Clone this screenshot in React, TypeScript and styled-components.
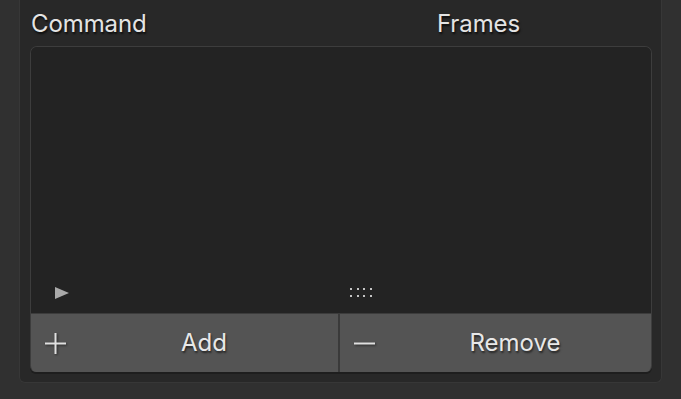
import React from "react";
import styled, { createGlobalStyle } from "styled-components";

const Global = createGlobalStyle`
  html, body { margin: 0; padding: 0; background: #303030; }
  body { font-family: Inter, "Noto Sans", sans-serif; }
`;

const Page = styled.div`
  width: 681px;
  height: 399px;
  padding: 0 19px 0 19px;
  box-sizing: border-box;
  background: #303030;
`;

const Panel = styled.div`
  width: 643px;
  height: 383px;
  box-sizing: border-box;
  background: #282828;
  border: 1px solid #373737;
  border-top: none;
  border-radius: 0 0 6px 6px;
  padding: 0 9px 10px 10px;
  display: flex;
  flex-direction: column;
`;

const Header = styled.div`
  height: 46px;
  display: flex;
  align-items: flex-start;
  flex-shrink: 0;
`;

const HeaderCell = styled.div<{ $w?: number }>`
  ${(p) => (p.$w ? `width: ${p.$w}px;` : "flex: 1;")}
  font-size: 24px;
  line-height: 24px;
  padding-top: 12px;
  padding-left: 1px;
  color: #e4e4e4;
  text-shadow: 1px 2px 2px rgba(0, 0, 0, 0.7);
  letter-spacing: -0.1px;
`;

const Box = styled.div`
  flex: 1;
  display: flex;
  flex-direction: column;
  border: 1px solid #3d3d3d;
  border-bottom: none;
  border-radius: 7px 7px 6px 6px;
  box-shadow: 0 2px 0 #1e1e1e;
  overflow: hidden;
`;

const List = styled.div`
  flex: 1;
  background: #232323;
  display: flex;
  flex-direction: column;
  justify-content: flex-end;
`;

const ListFooter = styled.div`
  display: grid;
  grid-template-columns: 308px 1fr;
  height: 27px;
  align-items: start;
`;

const FooterCell = styled.div<{ $pl: number }>`
  padding-left: ${(p) => p.$pl}px;
  display: flex;
  align-items: center;
  height: 14px;
`;

const ButtonRow = styled.div`
  display: flex;
  height: 58px;
  border-top: 1px solid #3c3c3c;
  background: #3a3a3a;
  gap: 2px;
`;

const Button = styled.div<{ $w: number }>`
  width: ${(p) => p.$w}px;
  background: #545454;
  display: flex;
  align-items: center;
  padding-left: 14px;
  box-sizing: border-box;
  color: #e8e8e8;
  font-size: 24px;
  text-shadow: 1px 2px 2px rgba(0, 0, 0, 0.55);
`;

const ButtonIcon = styled.svg`
  width: 21px;
  height: 21px;
  flex-shrink: 0;
  filter: drop-shadow(1px 1px 1px rgba(0, 0, 0, 0.5));
`;

const ButtonLabel = styled.span`
  flex: 1;
  text-align: center;
  padding-left: 4px;
  margin-top: -1px;
`;

const DOT_X = [0, 7, 13, 20];

export default function App() {
  return (
    <>
      <Global />
      <Page>
        <Panel>
          <Header>
            <HeaderCell $w={405}>Command</HeaderCell>
            <HeaderCell>Frames</HeaderCell>
          </Header>
          <Box>
            <List>
              <ListFooter>
                <FooterCell $pl={24}>
                  <svg width="14" height="12" viewBox="0 0 14 12">
                    <polygon points="0,0 14,6 0,12" fill="#a9a9a9" />
                  </svg>
                </FooterCell>
                <FooterCell $pl={11}>
                  <svg width="24" height="10" viewBox="0 0 24 10">
                    {[0, 1].map((r) =>
                      DOT_X.map((x) => (
                        <rect
                          key={`${r}-${x}`}
                          x={x}
                          y={r * 7}
                          width="2"
                          height="2"
                          fill="#c4c4c4"
                        />
                      ))
                    )}
                  </svg>
                </FooterCell>
              </ListFooter>
            </List>
            <ButtonRow>
              <Button $w={308}>
                <ButtonIcon viewBox="0 0 21 21">
                  <rect x="0" y="9.5" width="21" height="2" fill="#e0e0e0" />
                  <rect x="9.5" y="0" width="2" height="21" fill="#e0e0e0" />
                </ButtonIcon>
                <ButtonLabel>Add</ButtonLabel>
              </Button>
              <Button $w={312}>
                <ButtonIcon viewBox="0 0 21 21">
                  <rect x="0" y="9.5" width="21" height="2" fill="#e0e0e0" />
                </ButtonIcon>
                <ButtonLabel>Remove</ButtonLabel>
              </Button>
            </ButtonRow>
          </Box>
        </Panel>
      </Page>
    </>
  );
}
